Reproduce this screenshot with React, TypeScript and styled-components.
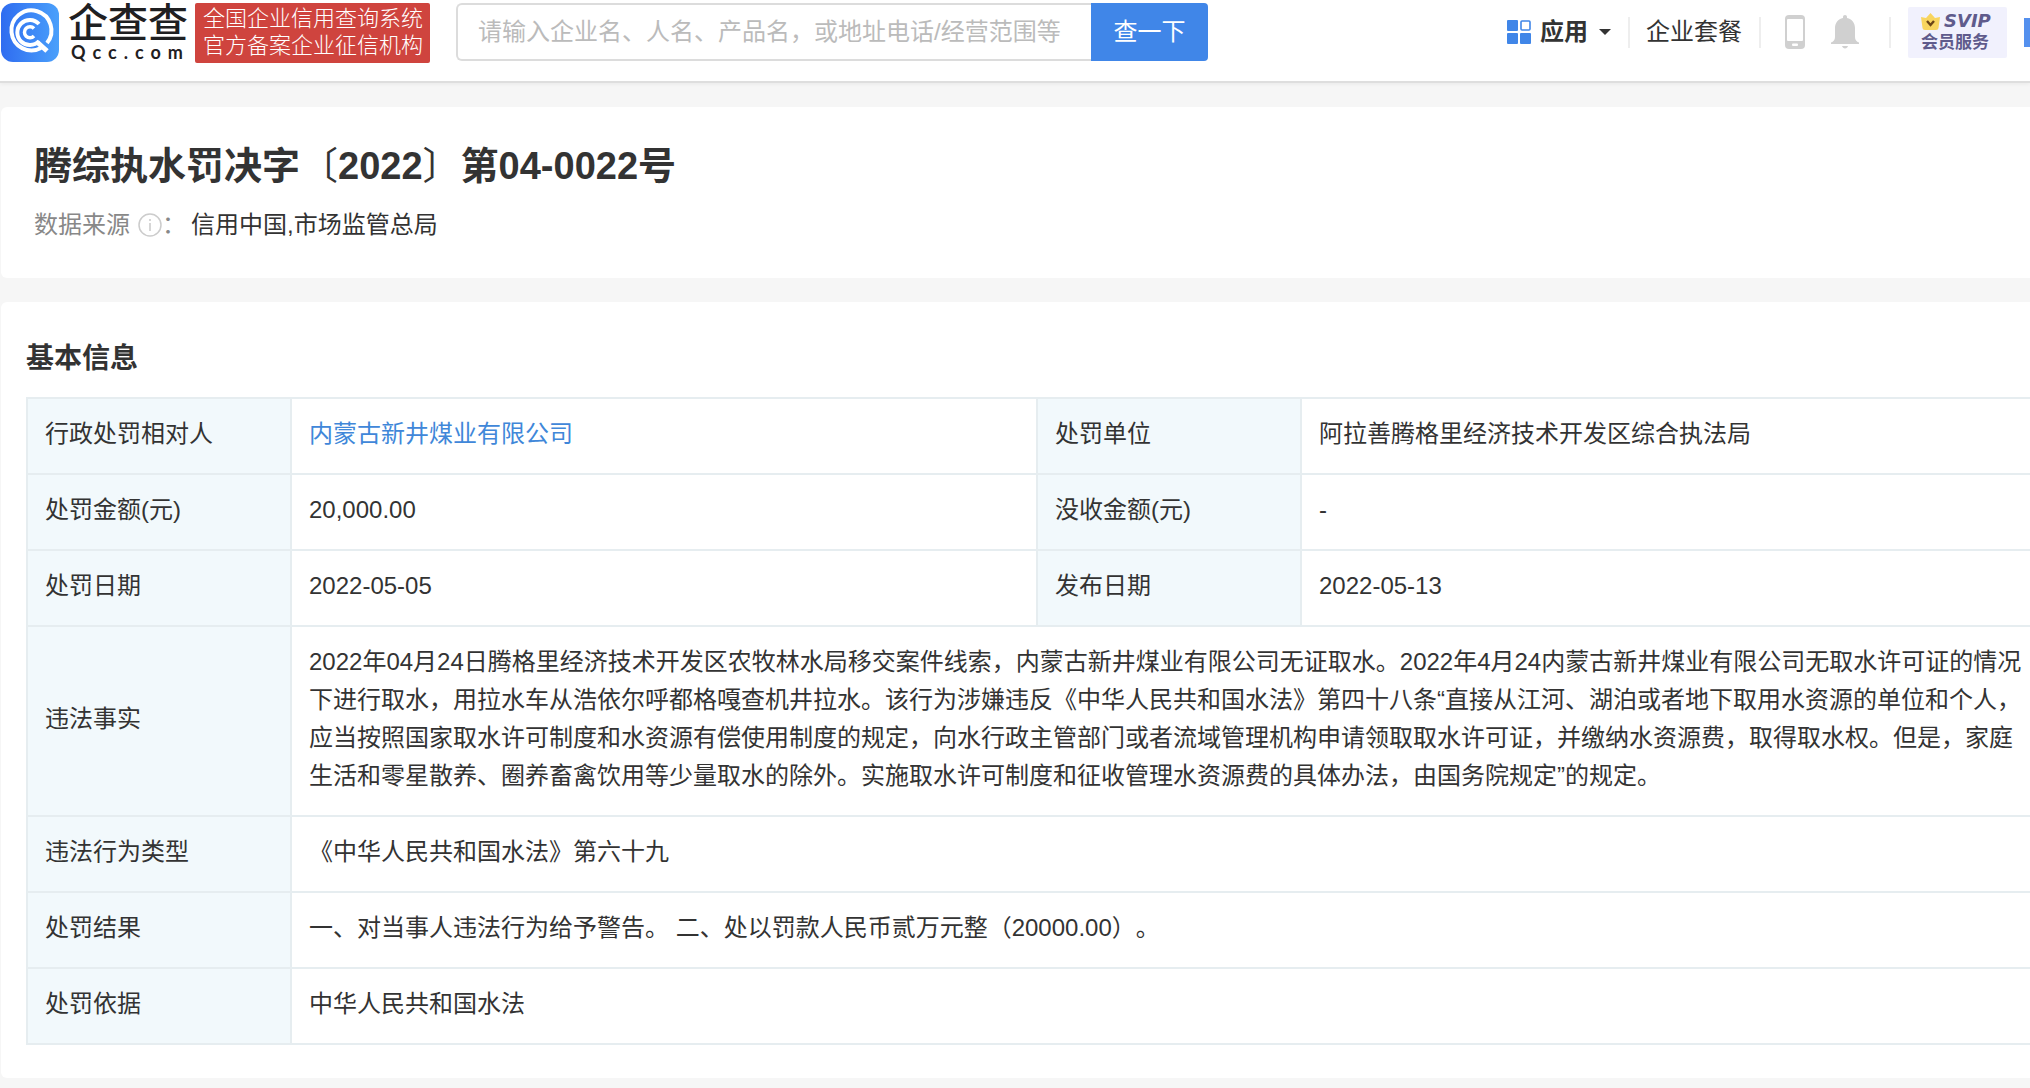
import React from "react";
import styled, { createGlobalStyle } from "styled-components";

const GlobalStyle = createGlobalStyle`
  *, *::before, *::after { box-sizing: border-box; }
  body {
    margin: 0;
    background: #f6f6f6;
    color: #333;
    font-family: "Liberation Sans", "Noto Sans CJK SC", sans-serif;
    font-size: 24px;
    line-height: 38px;
    text-spacing-trim: space-all;
  }
  button, input { font: inherit; }
  h1, h2, p { margin: 0; }
`;

const Page = styled.div`
  overflow-x: clip;
  padding-bottom: 9px;
`;

const Header = styled.header`
  display: flex;
  align-items: flex-start;
  height: 83px;
  padding: 3px 0 0 1px;
  background: #fff;
  border-bottom: 2px solid #dedede;
  box-shadow: 0 1px 4px rgba(0, 0, 0, 0.06);
`;

const Brand = styled.a`
  display: flex;
  flex: none;
  color: #1f2022;
  text-decoration: none;
`;

const BrandWords = styled.span`
  display: flex;
  flex-direction: column;
  padding-left: 8px;
  width: 135px;
`;

const BrandName = styled.span`
  font-size: 40px;
  line-height: 40px;
  font-weight: 500;
`;

const BrandDomain = styled.span`
  padding-left: 3px;
  font-family: Lato, "Liberation Sans", sans-serif;
  font-size: 18px;
  line-height: 18px;
  font-weight: 700;
  letter-spacing: 7px;
`;

const Slogan = styled.p`
  flex: none;
  margin-right: 26px;
  padding: 2px 7px 4px 8px;
  background: #cf443e;
  border-radius: 2px;
  color: #fff;
  font-size: 22px;
  font-weight: 300;
  line-height: 27px;
  white-space: nowrap;
`;

const Search = styled.form`
  display: flex;
  flex: 0 1 752px;
  height: 58px;
`;

const SearchInput = styled.input`
  flex: 1;
  min-width: 0;
  padding: 0 20px;
  border: 2px solid #dcdcdc;
  border-right: 0;
  border-radius: 6px 0 0 6px;
  outline: none;
  color: #333;
  &::placeholder { color: #bbb; opacity: 1; }
`;

const SearchButton = styled.button`
  flex: none;
  width: 117px;
  border: 0;
  border-radius: 0 4px 4px 0;
  background: #4086e8;
  color: #fff;
`;

const Nav = styled.nav`
  display: flex;
  flex: none;
  align-items: center;
  height: 58px;
  margin-left: auto;
  margin-right: -34px;
`;

const NavButton = styled.button<{ $bold?: boolean }>`
  display: flex;
  align-items: center;
  padding: 0;
  border: 0;
  background: none;
  color: #333;
  font-weight: ${(p) => (p.$bold ? 700 : 400)};
  white-space: nowrap;
`;

const AppsLabel = styled.span`
  padding: 0 11px 0 9px;
`;

const NavLink = styled.a`
  color: #333;
  text-decoration: none;
  white-space: nowrap;
`;

const Divider = styled.span<{ $left: number; $right: number }>`
  width: 2px;
  height: 31px;
  margin: 0 ${(p) => p.$right}px 0 ${(p) => p.$left}px;
  background: #eee;
`;

const IconGap = styled.span`
  width: 26px;
`;

const Vip = styled.a`
  display: flex;
  flex-direction: column;
  justify-content: center;
  width: 99px;
  height: 51px;
  margin-right: 17px;
  padding-left: 13px;
  border-radius: 2px;
  background: #f1f1fd;
  color: #5f5b8c;
  font-size: 17px;
  font-weight: 700;
  line-height: 22px;
  text-decoration: none;
`;

const VipTop = styled.span`
  display: flex;
  align-items: center;
  gap: 4px;
  font-family: "DejaVu Sans", sans-serif;
  font-size: 18px;
  font-style: italic;
`;

const Account = styled.button`
  width: 40px;
  height: 29px;
  border: 0;
  background: #5490ee;
`;

const Card = styled.section`
  margin: 24px -44px 0 1px;
  background: #fff;
  border-radius: 6px;
`;

const Summary = styled(Card)`
  padding: 35px 33px 34px;
`;

const Title = styled.h1`
  font-size: 38px;
  line-height: 48px;
`;

const Bracket = styled.span`
  font-weight: 400;
`;

const Source = styled.p`
  display: flex;
  align-items: center;
  margin-top: 16px;
`;

const SourceLabel = styled.span`
  display: flex;
  align-items: center;
  margin-right: 5px;
  color: #888;
  svg { margin-left: 8px; }
`;

const Details = styled(Card)`
  padding: 37px 26px 33px 25px;
`;

const SectionTitle = styled.h2`
  margin-bottom: 18px;
  font-size: 28px;
  line-height: 40px;
`;

const Table = styled.table`
  width: 100%;
  border-collapse: collapse;
  table-layout: fixed;
`;

const Col = styled.col<{ $label?: boolean }>`
  width: ${(p) => (p.$label ? "264px" : "auto")};
`;

const cell = `
  padding: 16px 17px 20px;
  border: 2px solid #e6edf0;
  font-weight: 400;
  text-align: left;
  vertical-align: middle;
`;

const Label = styled.th`
  ${cell}
  background: #f2f9fc;
`;

const Value = styled.td`
  ${cell}
`;

const CompanyLink = styled.a`
  color: #4087d9;
  text-decoration: none;
`;

const Logo = () => (
  <svg width="59" height="59" viewBox="0 0 59 59" fill="none" aria-hidden="true">
    <defs>
      <linearGradient id="logo-fill" x1="0" y1="0" x2="1" y2="0">
        <stop offset="0" stopColor="#2f6cf0" />
        <stop offset="1" stopColor="#4aa0fb" />
      </linearGradient>
    </defs>
    <rect width="58" height="59" rx="12" fill="url(#logo-fill)" />
    <g stroke="#fff" strokeWidth="4">
      <path d="M40 45 A20 20 0 1 1 46 40" />
      <path d="M36 39 L46 48" strokeWidth="5" />
      <path d="M38 21 A12.500 12.500 0 1 0 38 38" />
      <path d="M33 25.500 A5.500 5.500 0 1 0 33 33" strokeWidth="3.500" />
    </g>
  </svg>
);

const AppsIcon = () => (
  <svg width="24" height="24" viewBox="0 0 24 24" fill="#4086e8" aria-hidden="true">
    <rect width="11" height="11" rx="1" />
    <rect x="14" y="1" width="9" height="9" rx="1" fill="#fff" stroke="#4086e8" strokeWidth="1.600" />
    <rect y="13" width="11" height="11" rx="1" />
    <rect x="13" y="13" width="11" height="11" rx="1" />
  </svg>
);

const Caret = () => (
  <svg width="12" height="6" viewBox="0 0 12 6" aria-hidden="true">
    <path d="M0 0H12L6 6Z" fill="#333" />
  </svg>
);

const PhoneIcon = () => (
  <svg width="20" height="34" viewBox="0 0 20 34" aria-hidden="true">
    <rect width="20" height="34" rx="4" fill="#d0d0d0" />
    <rect x="2" y="4" width="16" height="22" rx="1" fill="#fff" />
    <rect x="7" y="28.500" width="6" height="2.500" rx="1" fill="#fff" />
  </svg>
);

const BellIcon = () => (
  <svg width="28" height="34" viewBox="0 0 28 34" fill="#d0d0d0" aria-hidden="true">
    <path d="M14 0c1.200 0 2 .9 2 2v1c5 1 8 5 8 10v9c0 3 1.500 4.500 4 5.500V29H0v-1.500C2.500 26.500 4 25 4 22v-9c0-5 3-9 8-10V2c0-1.100.8-2 2-2Z" />
    <path d="M11 31h6c-.5 1.500-1.500 2.500-3 2.500S11.500 32.500 11 31Z" />
  </svg>
);

const CrownIcon = () => (
  <svg width="19" height="17" viewBox="0 0 19 17" aria-hidden="true">
    <path d="M0 4L5 5L9.500 0L14 5L19 4L17.500 15Q17.300 17 15 17H4Q1.700 17 1.500 15Z" fill="#f8d55f" />
    <path d="M6 8L9.500 12L13 8" fill="none" stroke="#6b4517" strokeWidth="2.400" />
  </svg>
);

const InfoIcon = () => (
  <svg width="24" height="24" viewBox="0 0 24 24" fill="none" stroke="#ccc" aria-hidden="true">
    <circle cx="12" cy="12" r="11" strokeWidth="1.500" />
    <path d="M12 10V18M12 6V8" strokeWidth="1.600" />
  </svg>
);

const pairRows: { left: [string, React.ReactNode]; right: [string, React.ReactNode] }[] = [
  {
    left: ["行政处罚相对人", <CompanyLink href="#company">内蒙古新井煤业有限公司</CompanyLink>],
    right: ["处罚单位", "阿拉善腾格里经济技术开发区综合执法局"],
  },
  { left: ["处罚金额(元)", "20,000.00"], right: ["没收金额(元)", "-"] },
  { left: ["处罚日期", "2022-05-05"], right: ["发布日期", "2022-05-13"] },
];

const wideRows: [string, string][] = [
  [
    "违法事实",
    "2022年04月24日腾格里经济技术开发区农牧林水局移交案件线索，内蒙古新井煤业有限公司无证取水。2022年4月24内蒙古新井煤业有限公司无取水许可证的情况下进行取水，用拉水车从浩依尔呼都格嘎查机井拉水。该行为涉嫌违反《中华人民共和国水法》第四十八条“直接从江河、湖泊或者地下取用水资源的单位和个人，应当按照国家取水许可制度和水资源有偿使用制度的规定，向水行政主管部门或者流域管理机构申请领取取水许可证，并缴纳水资源费，取得取水权。但是，家庭生活和零星散养、圈养畜禽饮用等少量取水的除外。实施取水许可制度和征收管理水资源费的具体办法，由国务院规定”的规定。",
  ],
  ["违法行为类型", "《中华人民共和国水法》第六十九"],
  ["处罚结果", "一、对当事人违法行为给予警告。 二、处以罚款人民币贰万元整（20000.00）。"],
  ["处罚依据", "中华人民共和国水法"],
];

export default function App() {
  return (
    <Page lang="zh-CN">
      <GlobalStyle />
      <Header>
        <Brand href="#home">
          <Logo />
          <BrandWords>
            <BrandName>企查查</BrandName>
            <BrandDomain>Qcc.com</BrandDomain>
          </BrandWords>
        </Brand>
        <Slogan>
          全国企业信用查询系统
          <br />
          官方备案企业征信机构
        </Slogan>
        <Search onSubmit={(e) => e.preventDefault()}>
          <SearchInput
            type="text"
            aria-label="搜索"
            placeholder="请输入企业名、人名、产品名，或地址电话/经营范围等"
          />
          <SearchButton type="submit">查一下</SearchButton>
        </Search>
        <Nav>
          <NavButton type="button" $bold>
            <AppsIcon />
            <AppsLabel>应用</AppsLabel>
            <Caret />
          </NavButton>
          <Divider $left={17} $right={16} />
          <NavLink href="#plans">企业套餐</NavLink>
          <Divider $left={17} $right={24} />
          <NavButton type="button" aria-label="手机版">
            <PhoneIcon />
          </NavButton>
          <IconGap />
          <NavButton type="button" aria-label="消息">
            <BellIcon />
          </NavButton>
          <Divider $left={30} $right={17} />
          <Vip href="#svip">
            <VipTop>
              <CrownIcon />
              SVIP
            </VipTop>
            <span>会员服务</span>
          </Vip>
          <Account type="button" aria-label="账户" />
        </Nav>
      </Header>

      <main>
        <Summary>
          <Title>
            腾综执水罚决字<Bracket>〔</Bracket>2022<Bracket>〕</Bracket>第04-0022号
          </Title>
          <Source>
            <SourceLabel>
              数据来源
              <InfoIcon />：
            </SourceLabel>
            信用中国,市场监管总局
          </Source>
        </Summary>

        <Details>
          <SectionTitle>基本信息</SectionTitle>
          <Table>
            <colgroup>
              <Col $label />
              <Col />
              <Col $label />
              <Col />
            </colgroup>
            <tbody>
              {pairRows.map(({ left, right }) => (
                <tr key={left[0]}>
                  <Label scope="row">{left[0]}</Label>
                  <Value>{left[1]}</Value>
                  <Label scope="row">{right[0]}</Label>
                  <Value>{right[1]}</Value>
                </tr>
              ))}
              {wideRows.map(([label, value]) => (
                <tr key={label}>
                  <Label scope="row">{label}</Label>
                  <Value colSpan={3}>{value}</Value>
                </tr>
              ))}
            </tbody>
          </Table>
        </Details>
      </main>
    </Page>
  );
}
